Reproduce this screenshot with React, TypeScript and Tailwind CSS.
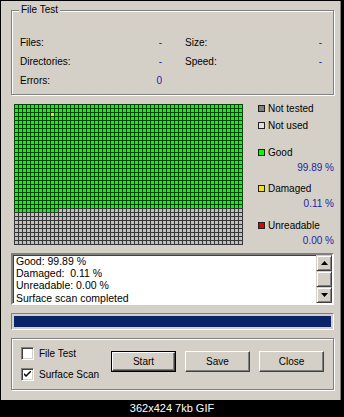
import React from "react"

const COLS = 57
const ROWS = 35

function cellColor(r: number, c: number) {
  if (r === 2 && c === 9) return "#f2e400"
  if (r < 26) return "#00ff00"
  if (r === 26 && c < 11) return "#00ff00"
  return "#c0c0c0"
}

function lineColor(fill: string) {
  return fill === "#c0c0c0" ? "#363636" : "#0c400c"
}

function SurfaceGrid() {
  const cells = []
  for (let r = 0; r < ROWS; r++) {
    for (let c = 0; c < COLS; c++) {
      const fill = cellColor(r, c)
      cells.push(
        <g key={r + "-" + c}>
          <rect x={c * 4} y={r * 4} width={5} height={5} fill={lineColor(fill)} />
          <rect x={c * 4 + 1} y={r * 4 + 1} width={3} height={3} fill={fill} />
        </g>
      )
    }
  }
  return (
    <svg width={COLS * 4 + 1} height={ROWS * 4 + 1} className="block" shapeRendering="crispEdges">
      {cells}
    </svg>
  )
}

function LegendItem({ color, label, className = "" }: { color: string; label: string; className?: string }) {
  return (
    <div className={`flex items-center h-[16px] ${className}`}>
      <span className="w-[7px] h-[7px] border border-[#202020]" style={{ backgroundColor: color }} />
      <span className="ml-[3px]">{label}</span>
    </div>
  )
}

function Value({ children, className = "" }: { children: React.ReactNode; className?: string }) {
  return <div className={`h-[16px] leading-[16px] text-right text-[#2323a0] ${className}`}>{children}</div>
}

function ScrollBtn({ children }: { children?: React.ReactNode }) {
  return (
    <div className="w-[16px] h-[16px] flex items-center justify-center bg-[#d4d0c8] border border-t-[#d4d0c8] border-l-[#d4d0c8] border-r-[#404040] border-b-[#404040] shadow-[inset_1px_1px_0_#fff,inset_-1px_-1px_0_#808080]">
      {children}
    </div>
  )
}

function Button({ label, isDefault = false }: { label: string; isDefault?: boolean }) {
  return (
    <div className={`w-[65px] h-[21px] ${isDefault ? "border border-black" : ""}`}>
      <div className="w-full h-full flex items-center justify-center border border-t-white border-l-white border-r-[#404040] border-b-[#404040] shadow-[inset_-1px_-1px_0_#808080]">
        {label}
      </div>
    </div>
  )
}

function CheckBox({ label, checked = false }: { label: string; checked?: boolean }) {
  return (
    <div className="flex items-center h-[13px]">
      <div className="w-[13px] h-[13px] bg-white border border-t-[#808080] border-l-[#808080] border-r-white border-b-white shadow-[inset_1px_1px_0_#404040,inset_-1px_-1px_0_#d4d0c8] flex items-center justify-center">
        {checked && (
          <svg width="7" height="7" viewBox="0 0 7 7">
            <path d="M0 2 L2 4 L7 -1 L7 1 L2 6 L0 4 Z" fill="#000" />
          </svg>
        )}
      </div>
      <span className="ml-[5px]">{label}</span>
    </div>
  )
}

export default function App() {
  return (
    <div className="w-[344px] h-[417px] bg-black flex flex-col text-[10px] text-black" style={{ fontFamily: '"Liberation Sans", Arial, sans-serif' }}>
      <div className="ml-[1px] mt-[1px] w-[340px] h-[399px] bg-[#d4d0c8] border-r border-[#808080] pl-[10px] pt-[9px]">
        {/* File Test group */}
        <div className="relative w-[323px] h-[85px] border border-[#808080] shadow-[inset_1px_1px_0_#fff,1px_1px_0_#fff]">
          <span className="absolute -top-[7px] left-[7px] px-[2px] bg-[#d4d0c8] leading-[12px]">File Test</span>
          <div className="flex pt-[22px] pl-[8px]">
            <div className="w-[142px]">
              <div className="flex justify-between h-[19px] leading-[19px]"><span>Files:</span><span className="text-[#2323a0]">-</span></div>
              <div className="flex justify-between h-[19px] leading-[19px]"><span>Directories:</span><span className="text-[#2323a0]">-</span></div>
              <div className="flex justify-between h-[19px] leading-[19px]"><span>Errors:</span><span className="text-[#2323a0]">0</span></div>
            </div>
            <div className="w-[137px] ml-[23px]">
              <div className="flex justify-between h-[19px] leading-[19px]"><span>Size:</span><span className="text-[#2323a0]">-</span></div>
              <div className="flex justify-between h-[19px] leading-[19px]"><span>Speed:</span><span className="text-[#2323a0]">-</span></div>
            </div>
          </div>
        </div>

        {/* Surface map + legend */}
        <div className="flex w-[323px] mt-[5px]">
          <div className="ml-[3px] mt-[4px]">
            <SurfaceGrid />
          </div>
          <div className="ml-[15px] w-[76px]">
            <LegendItem color="#808080" label="Not tested" className="h-[17px]" />
            <LegendItem color="#e0e0e0" label="Not used" className="h-[17px]" />
            <LegendItem color="#00ff00" label="Good" className="mt-[10px]" />
            <Value>99.89 %</Value>
            <LegendItem color="#f2e400" label="Damaged" className="mt-[4px]" />
            <Value>0.11 %</Value>
            <LegendItem color="#e00000" label="Unreadable" className="mt-[5px]" />
            <Value>0.00 %</Value>
          </div>
        </div>

        {/* Log */}
        <div className="mt-[4px] w-[323px] h-[52px] flex bg-white border-2 border-t-[#808080] border-l-[#808080] border-r-white border-b-white shadow-[inset_1px_1px_0_#404040]">
          <div className="flex-1 pl-[3px] leading-[12.2px] text-[10.5px]">
            <div>Good: 99.89 %</div>
            <div>Damaged:&nbsp; 0.11 %</div>
            <div>Unreadable: 0.00 %</div>
            <div>Surface scan completed</div>
          </div>
          <div className="w-[16px] flex flex-col">
            <ScrollBtn>
              <svg width="7" height="4" viewBox="0 0 7 4"><path d="M3.5 0 L7 4 L0 4 Z" fill="#000" /></svg>
            </ScrollBtn>
            <ScrollBtn />
            <ScrollBtn>
              <svg width="7" height="4" viewBox="0 0 7 4"><path d="M0 0 L7 0 L3.5 4 Z" fill="#000" /></svg>
            </ScrollBtn>
          </div>
        </div>

        {/* Progress */}
        <div className="mt-[8px] w-[323px] h-[17px] border border-t-[#808080] border-l-[#808080] border-r-white border-b-white p-[2px]">
          <div className="w-full h-full bg-[#0a246a]" />
        </div>

        {/* Options group */}
        <div className="mt-[8px] w-[323px] h-[52px] border border-[#808080] shadow-[inset_1px_1px_0_#fff,1px_1px_0_#fff] flex items-center pl-[9px]">
          <div className="flex flex-col gap-[8px] w-[90px]">
            <CheckBox label="File Test" />
            <CheckBox label="Surface Scan" checked />
          </div>
          <div className="flex gap-[9px] -mt-[6px]">
            <Button label="Start" isDefault />
            <Button label="Save" />
            <Button label="Close" />
          </div>
        </div>
      </div>
      <div className="flex-1 flex items-center justify-center text-white text-[11px]">362x424 7kb GIF</div>
    </div>
  )
}
